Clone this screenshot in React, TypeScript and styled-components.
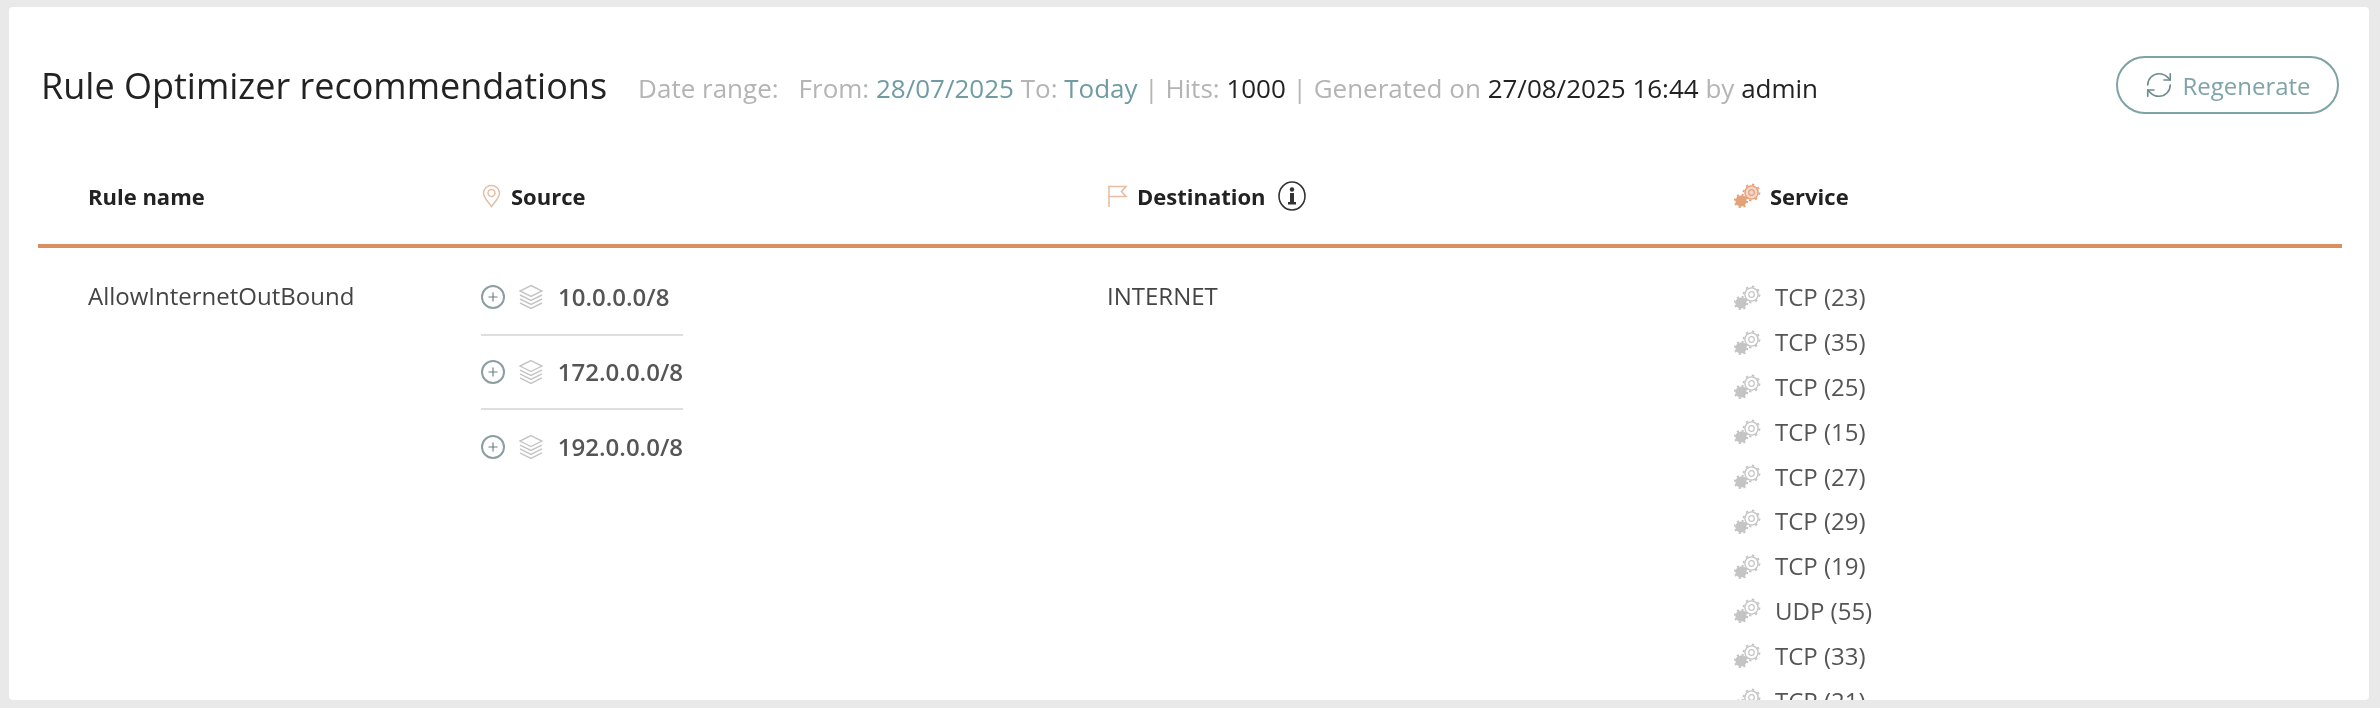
import styled, { createGlobalStyle } from "styled-components";
import { RefreshCw, Plus } from "lucide-react";

const GlobalStyle = createGlobalStyle`
  html, body {
    margin: 0;
    height: 708px;
    overflow: hidden;
    background: #e9e9e9;
    font-family: "Open Sans", "Liberation Sans", sans-serif;
  }
`;

const Panel = styled.div`
  margin: 7px 11px 8px 9px;
  height: 693px;
  box-sizing: border-box;
  background: #fff;
  border-radius: 4px;
  padding: 49px 27px 0 29px;
  overflow: hidden;
  filter: blur(0.5px);
`;

const TopBar = styled.div`
  display: flex;
  align-items: center;
  height: 58px;
  padding-left: 3px;
`;

const Title = styled.h1`
  margin: 0;
  font-size: 36px;
  font-weight: 400;
  color: #222;
  white-space: nowrap;
`;

const Meta = styled.div`
  margin-left: 31px;
  margin-top: 5px;
  font-size: 26px;
  color: #b4b4b4;
  white-space: nowrap;
`;

const Gap = styled.span`
  display: inline-block;
  width: 20px;
`;

const Tint = styled.span<{ $dark?: boolean }>`
  color: ${(p) => (p.$dark ? "#222" : "#6f9ca3")};
`;

const RegenerateButton = styled.button`
  margin-left: auto;
  margin-right: 3px;
  display: flex;
  align-items: center;
  justify-content: center;
  gap: 8px;
  width: 223px;
  height: 58px;
  box-sizing: border-box;
  background: #fff;
  border: 2px solid #7ea3a3;
  border-radius: 29px;
  color: #7ea3a8;
  font-family: inherit;
  font-size: 24px;
`;

const Table = styled.div`
  display: grid;
  grid-template-columns: 443px 626px 627px 1fr;
`;

const HeadCell = styled.div<{ $first?: boolean }>`
  display: flex;
  align-items: center;
  gap: 9px;
  height: 134px;
  padding-left: ${(p) => (p.$first ? "50px" : "0")};
  padding-top: 33px;
  box-sizing: border-box;
  border-bottom: 4px solid #d98f5e;
  font-size: 22px;
  font-weight: 700;
  color: #222;
`;

const BodyCell = styled.div<{ $first?: boolean }>`
  padding-top: 30px;
  padding-left: ${(p) => (p.$first ? "50px" : "0")};
  font-size: 24px;
  color: #444;
  line-height: 36px;
`;

const SourceList = styled.div`
  width: 202px;
  margin-top: -17px;
`;

const SourceRow = styled.div`
  display: flex;
  align-items: center;
  height: 74.5px;
  box-sizing: border-box;
  font-weight: 600;
  color: #555;
  border-bottom: 2px solid #dedede;

  &:last-child {
    border-bottom: 0;
  }
`;

const SourceName = styled.span`
  margin-left: 14px;
`;

const PlusCircle = styled.span`
  display: flex;
  align-items: center;
  justify-content: center;
  width: 24px;
  height: 24px;
  box-sizing: border-box;
  border: 2px solid #8d9ea3;
  border-radius: 50%;
  color: #6d7f85;
  margin-right: 13px;
`;

const ServiceList = styled.div`
  margin-top: -3px;
`;

const ServiceRow = styled.div`
  display: flex;
  align-items: center;
  gap: 14px;
  height: 44.8px;
  color: #555;
`;

const InfoBadge = styled.span`
  display: flex;
  margin-left: 3px;
`;

const PinIcon = () => (
  <svg width="21" height="24" viewBox="0 0 21 24" fill="none" stroke="#e3bfa5" strokeWidth="1.5">
    <path d="M10.5 22.5 C7 17.5 2.5 14 2.5 9 a8 7.5 0 0 1 16 0 C18.5 14 14 17.5 10.5 22.5 Z" />
    <circle cx="10.5" cy="9" r="3.5" />
  </svg>
);

const FlagIcon = () => (
  <svg width="21" height="24" viewBox="0 0 21 24" fill="none" stroke="#e8bda2" strokeWidth="1.6">
    <path d="M2 1.5 V23" />
    <path d="M2 2.5 H19 L14.5 7.5 L19 12.5 H2" />
  </svg>
);

const GearIcon = ({ color, hole }: { color: string; hole: string }) => (
  <svg width="27" height="25" viewBox="0 0 27 25">
    <circle cx="7" cy="18" r="5.6" fill={color} />
    <circle cx="7" cy="18" r="6" fill="none" stroke={color} strokeWidth="2.4" strokeDasharray="2 2.7" />
    <circle cx="17.5" cy="9.5" r="6.6" fill={hole} stroke={color} strokeWidth="1.4" />
    <circle cx="17.5" cy="9.5" r="8" fill="none" stroke={color} strokeWidth="1.8" strokeDasharray="2.4 3.9" />
    <circle cx="17.5" cy="9.5" r="2.8" fill="none" stroke={color} strokeWidth="1.2" />
  </svg>
);

const LayersIcon = () => (
  <svg width="26" height="26" viewBox="0 0 26 26" fill="none" stroke="#c4c4c4" strokeWidth="1.4">
    <path d="M13 1.5 L24 7 L13 12.5 L2 7 Z" />
    <path d="M2 11 L13 16.5 L24 11" />
    <path d="M2 15 L13 20.5 L24 15" />
    <path d="M2 19 L13 24.5 L24 19" />
  </svg>
);

const InfoIcon = () => (
  <svg width="28" height="30" viewBox="0 0 28 30" fill="none" stroke="#333">
    <ellipse cx="14" cy="15" rx="13" ry="14" strokeWidth="1.6" />
    <circle cx="14" cy="8.5" r="2.2" fill="#333" stroke="none" />
    <path d="M12 12 H16 V21 H18 V23.5 H10 V21 H12 Z" fill="#333" stroke="none" />
  </svg>
);

const sources = ["10.0.0.0/8", "172.0.0.0/8", "192.0.0.0/8"];
const services = [
  "TCP (23)",
  "TCP (35)",
  "TCP (25)",
  "TCP (15)",
  "TCP (27)",
  "TCP (29)",
  "TCP (19)",
  "UDP (55)",
  "TCP (33)",
  "TCP (21)",
];

const App = () => {
  return (
    <>
      <GlobalStyle />
      <Panel>
        <TopBar>
          <Title>Rule Optimizer recommendations</Title>
          <Meta>
            Date range:<Gap />From: <Tint>28/07/2025</Tint> To: <Tint>Today</Tint> | Hits:{" "}
            <Tint $dark>1000</Tint> | Generated on <Tint $dark>27/08/2025 16:44</Tint> by{" "}
            <Tint $dark>admin</Tint>
          </Meta>
          <RegenerateButton>
            <RefreshCw size={30} strokeWidth={1.3} color="#6d8a8c" />
            Regenerate
          </RegenerateButton>
        </TopBar>
        <Table>
          <HeadCell $first>Rule name</HeadCell>
          <HeadCell>
            <PinIcon />
            Source
          </HeadCell>
          <HeadCell>
            <FlagIcon />
            Destination
            <InfoBadge>
              <InfoIcon />
            </InfoBadge>
          </HeadCell>
          <HeadCell>
            <GearIcon color="#e3a27a" hole="#f7d6c8" />
            Service
          </HeadCell>
          <BodyCell $first>AllowInternetOutBound</BodyCell>
          <BodyCell>
            <SourceList>
              {sources.map((s) => (
                <SourceRow key={s}>
                  <PlusCircle>
                    <Plus size={14} strokeWidth={2} />
                  </PlusCircle>
                  <LayersIcon />
                  <SourceName>{s}</SourceName>
                </SourceRow>
              ))}
            </SourceList>
          </BodyCell>
          <BodyCell>INTERNET</BodyCell>
          <BodyCell>
            <ServiceList>
              {services.map((s) => (
                <ServiceRow key={s}>
                  <GearIcon color="#c4c4c4" hole="#fff" />
                  {s}
                </ServiceRow>
              ))}
            </ServiceList>
          </BodyCell>
        </Table>
      </Panel>
    </>
  );
};

export default App;
